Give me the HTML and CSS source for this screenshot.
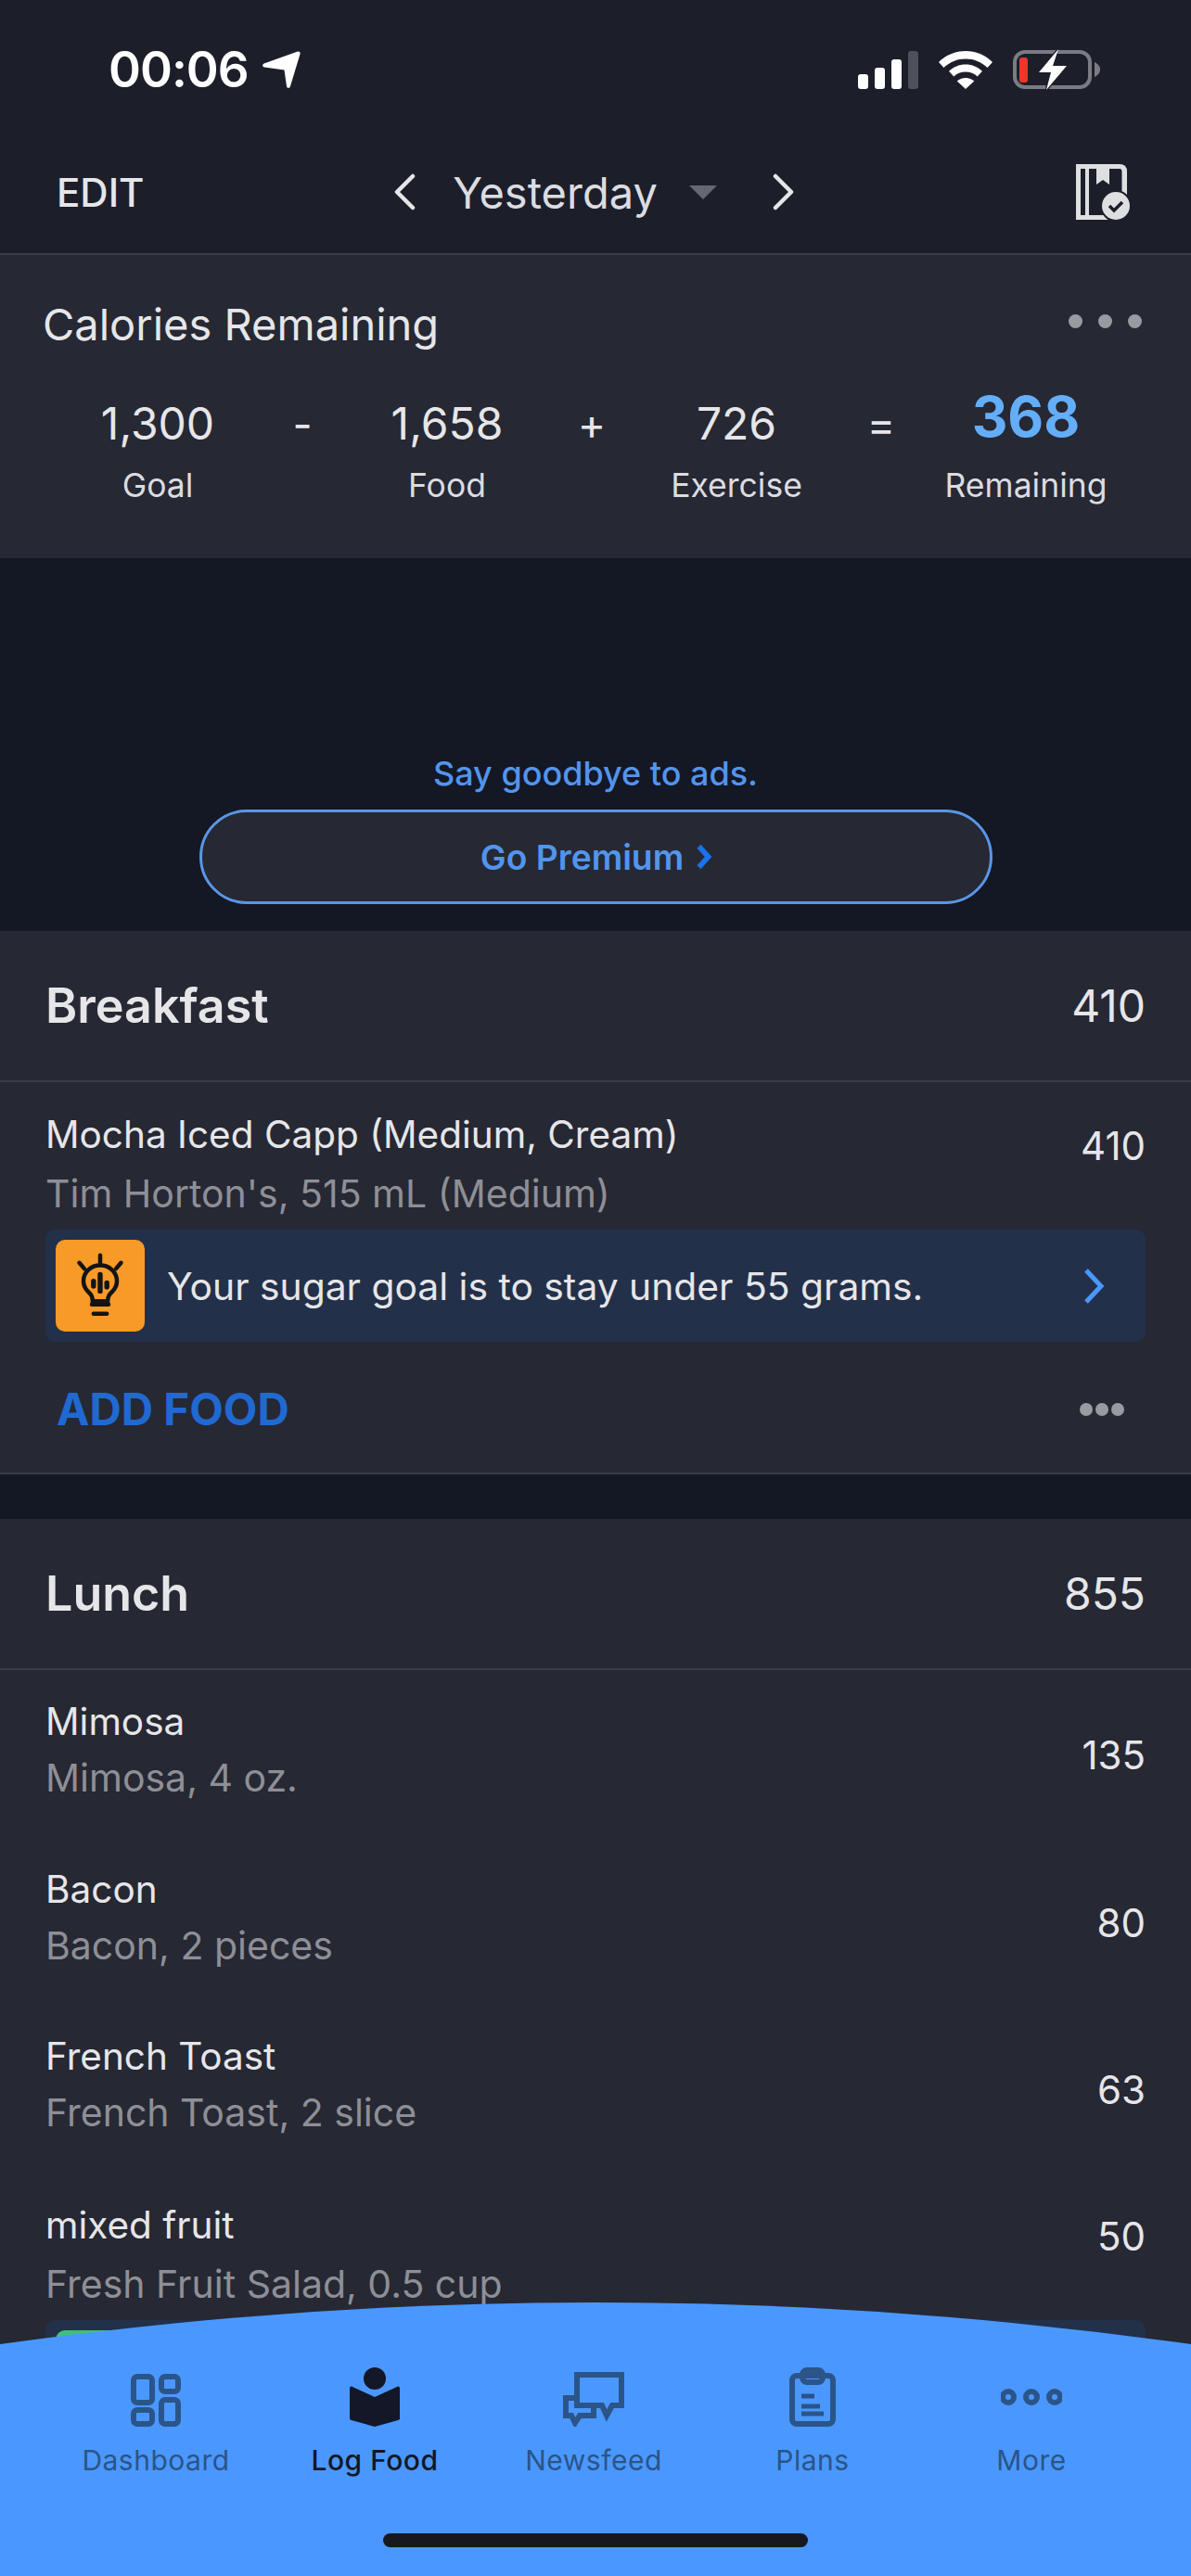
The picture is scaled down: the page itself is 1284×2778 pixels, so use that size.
FILE: index.html
```html
<!DOCTYPE html>
<html lang="en">
  <head>
    <meta charset="utf-8">
    <title>Diary</title>
    <link rel="stylesheet" href="styles.css">
  </head>
  <body>
    <div class="phone">
      <header class="topbar">
        <div class="status">
          <div class="clock">
            <span>00:06</span>
            <svg class="loc" viewBox="0 0 41 40"><path d="M38 0.500c1.600-.5 3 .8 2.600 2.400L30 38c-.6 2.500-3.600 2.500-4-.1L23.500 20.500 2 17.500c-2.200-.4-2.500-3-.4-4z"/></svg>
          </div>
          <div class="indicators">
            <svg class="signal" viewBox="0 0 65 41">
              <rect x="0" y="25" width="11" height="16" rx="3"/>
              <rect x="18" y="18" width="11" height="23" rx="3"/>
              <rect x="36" y="9" width="11" height="32" rx="3"/>
              <rect class="off" x="54" y="0" width="11" height="41" rx="3"/>
            </svg>
            <svg class="wifi" viewBox="0 0 58 41">
              <path d="M29 0c11 0 21 4.200 29 12l-5.500 6C46 11.800 38 8.500 29 8.500S12 11.800 5.500 18L0 12C8 4.200 18 0 29 0z"/>
              <path d="M29 14.500c7 0 13.300 2.700 18 7.300l-5.300 5.700C38.300 24.300 34 22.500 29 22.500s-9.300 1.800-12.700 5L11 21.800c4.700-4.600 11-7.300 18-7.300z"/>
              <path d="M29 29c3.600 0 6.800 1.300 9.200 3.600L29 41l-9.200-8.400C22.200 30.300 25.400 29 29 29z"/>
            </svg>
            <svg class="battery" viewBox="0 0 95 44">
              <rect class="shell" x="2" y="3" width="81" height="38" rx="11"/>
              <rect class="level" x="7" y="9" width="9" height="27" rx="3"/>
              <path class="nub" d="M88 14c3 1.500 6 4 6 8s-3 6.500-6 8z"/>
              <path class="bolt-gap" d="M25 26L49 -2 45 16 63 16 34 48 38 27z"/>
              <path class="bolt" d="M28 25L49 0l-6 18h15L36 44l5-19z"/>
            </svg>
          </div>
        </div>
        <nav class="toolbar">
          <span class="edit">EDIT</span>
          <div class="date-nav">
            <svg class="chev" viewBox="0 0 24 40"><path d="M21 3L4 20l17 17"/></svg>
            <span class="date">Yesterday</span>
            <span class="caret"></span>
            <svg class="chev" viewBox="0 0 24 40"><path d="M3 3l17 17L3 37"/></svg>
          </div>
          <svg class="book-check" viewBox="0 0 60 60">
            <path class="book-body" d="M0 0H47Q55 0 55 8V40H40L34 60H0z"/>
            <path class="book-cut" d="M5 5H10V55H5zM14 5H22V22L29 17L36 22V5H47Q49.500 5 49.500 8V45H30V55H14z"/>
            <circle class="check-ring" cx="43" cy="45" r="17"/>
            <circle class="check-disc" cx="43" cy="45" r="15"/>
            <path class="check-mark" d="M36 45l5 5 9-9"/>
          </svg>
        </nav>
      </header>

      <section class="summary">
        <div class="summary-head">
          <h2>Calories Remaining</h2>
          <div class="dots"><i></i><i></i><i></i></div>
        </div>
        <div class="equation">
          <div class="term"><b>1,300</b><span>Goal</span></div>
          <div class="op">-</div>
          <div class="term"><b>1,658</b><span>Food</span></div>
          <div class="op">+</div>
          <div class="term"><b>726</b><span>Exercise</span></div>
          <div class="op">=</div>
          <div class="term result"><b>368</b><span>Remaining</span></div>
        </div>
      </section>

      <section class="promo">
        <p>Say goodbye to ads.</p>
        <div class="premium-btn">
          <span>Go Premium</span>
          <svg viewBox="0 0 16 26"><path d="M4 3l9 10-9 10"/></svg>
        </div>
      </section>

      <section class="meal">
        <div class="meal-head"><h2>Breakfast</h2><span>410</span></div>
        <div class="food food-tipped">
          <div class="food-text">
            <div class="food-name">Mocha Iced Capp (Medium, Cream)</div>
            <div class="food-sub">Tim Horton's, 515 mL (Medium)</div>
          </div>
          <div class="kcal">410</div>
        </div>
        <div class="tip">
          <div class="tip-icon">
            <svg viewBox="0 0 60 80">
              <path class="bulb" d="M30 3v9M5 12l6 7M55 12l-6 7M20 62h20M22 73h16"/>
              <path class="bulb" d="M21 58c0-6-2-8-6-12-3-3-5-8-5-12 0-11 9-19 20-19s20 8 20 19c0 4-2 9-5 12-4 4-6 6-6 12z"/>
              <path class="bulb-bars" d="M22 34v6M30 26v20M38 36v5"/>
            </svg>
          </div>
          <span class="tip-text">Your sugar goal is to stay under 55 grams.</span>
          <svg class="tip-chev" viewBox="0 0 24 40"><path d="M4 3l16 17L4 37"/></svg>
        </div>
        <div class="meal-foot">
          <span class="add-food">ADD FOOD</span>
          <div class="dots dots-small"><i></i><i></i><i></i></div>
        </div>
      </section>

      <section class="meal meal-lunch">
        <div class="meal-head"><h2>Lunch</h2><span>855</span></div>
        <div class="food">
          <div class="food-text">
            <div class="food-name">Mimosa</div>
            <div class="food-sub">Mimosa, 4 oz.</div>
          </div>
          <div class="kcal">135</div>
        </div>
        <div class="food">
          <div class="food-text">
            <div class="food-name">Bacon</div>
            <div class="food-sub">Bacon, 2 pieces</div>
          </div>
          <div class="kcal">80</div>
        </div>
        <div class="food">
          <div class="food-text">
            <div class="food-name">French Toast</div>
            <div class="food-sub">French Toast, 2 slice</div>
          </div>
          <div class="kcal">63</div>
        </div>
        <div class="food food-tipped">
          <div class="food-text">
            <div class="food-name">mixed fruit</div>
            <div class="food-sub">Fresh Fruit Salad, 0.5 cup</div>
          </div>
          <div class="kcal">50</div>
        </div>
        <div class="tip">
          <div class="tip-icon tip-icon-green"></div>
        </div>
      </section>

      <footer class="tabbar">
        <div class="tabs">
          <div class="tab">
            <svg viewBox="0 0 54 64">
              <rect x="3" y="10" width="20" height="28" rx="4"/>
              <rect x="33" y="10" width="18" height="16" rx="4"/>
              <rect x="3" y="46" width="20" height="15" rx="4"/>
              <rect x="33" y="35" width="18" height="26" rx="4"/>
            </svg>
            <span>Dashboard</span>
          </div>
          <div class="tab active">
            <svg viewBox="0 0 54 64">
              <circle class="solid" cx="27" cy="12" r="12"/>
              <path class="solid" d="M3 21l24 11 24-11c2-1 3 0 3 2v32c0 1-1 2-2 2L27 64 2 57c-1 0-2-1-2-2V23c0-2 1-3 3-2z"/>
            </svg>
            <span>Log Food</span>
          </div>
          <div class="tab">
            <svg viewBox="0 0 66 64">
              <path d="M15 8H63V41H53L47 52L42 41H15Z"/>
              <path d="M15 33H3V52H9L13 60L18 52H33V41"/>
            </svg>
            <span>Newsfeed</span>
          </div>
          <div class="tab">
            <svg viewBox="0 0 50 64">
              <rect x="3" y="9" width="44" height="52" rx="5"/>
              <rect x="14" y="3" width="22" height="13" rx="5"/>
              <path class="thin" d="M13 31h14M13 42h20M13 50h24"/>
            </svg>
            <span>Plans</span>
          </div>
          <div class="tab">
            <svg viewBox="0 0 66 64">
              <circle cx="8" cy="32" r="6"/>
              <circle cx="33" cy="32" r="6"/>
              <circle cx="58" cy="32" r="6"/>
            </svg>
            <span>More</span>
          </div>
        </div>
        <div class="home-bar"></div>
      </footer>
    </div>
  </body>
</html>
```

FILE: styles.css
```css
* {
  box-sizing: border-box;
}
html, body {
  margin: 0;
  padding: 0;
}
body {
  font-family: Inter, "Liberation Sans", sans-serif;
  background: #141724;
  color: #e6e6e9;
}
h2 {
  margin: 0;
  font-weight: 400;
}
.phone {
  position: relative;
  width: 1284px;
  height: 2778px;
  overflow: hidden;
  background: #141724;
}

/* top */
.topbar {
  background: #1c1f2a;
  height: 275px;
  border-bottom: 2px solid #3a3c46;
}
.status {
  display: flex;
  justify-content: space-between;
  padding: 53px 97px 0 117px;
  height: 170px;
}
.clock {
  display: flex;
  gap: 15px;
  height: 44px;
  align-items: center;
  font-size: 53px;
  letter-spacing: -1px;
  font-weight: 600;
  color: #fff;
}
.loc {
  width: 41px;
  height: 40px;
  fill: #fff;
}
.indicators {
  display: flex;
  gap: 22px;
  height: 44px;
  align-items: center;
}
.signal {
  width: 65px;
  height: 41px;
  fill: #fff;
}
.signal .off {
  fill: #4e515c;
}
.wifi {
  width: 58px;
  height: 41px;
  fill: #fff;
}
.battery {
  width: 95px;
  height: 44px;
  overflow: visible;
}
.battery .shell {
  fill: none;
  stroke: #7b7c83;
  stroke-width: 4;
}
.battery .level {
  fill: #f0352b;
}
.battery .nub {
  fill: #7b7c83;
}
.battery .bolt-gap {
  fill: #1c1f2a;
}
.battery .bolt {
  fill: #fff;
}
.toolbar {
  display: grid;
  grid-template-columns: 1fr auto 1fr;
  align-items: center;
  padding: 0 64px 0 61px;
  margin-top: 4px;
  height: 66px;
}
.edit {
  font-size: 42px;
  font-weight: 500;
  color: #e6e6e9;
}
.date-nav {
  display: flex;
  align-items: center;
}
.chev {
  width: 24px;
  height: 40px;
  fill: none;
  stroke: #e6e6e9;
  stroke-width: 4.500;
  stroke-linecap: round;
  stroke-linejoin: round;
}
.date {
  font-size: 47px;
  margin-left: 40px;
  color: #dcdce0;
}
.caret {
  width: 0;
  height: 0;
  margin: 0 60px 0 34px;
  border-left: 15px solid transparent;
  border-right: 15px solid transparent;
  border-top: 15px solid #666770;
}
.book-check {
  justify-self: end;
  width: 60px;
  height: 60px;
}
.book-body {
  fill: #dfdfe2;
}
.book-cut {
  fill: #1c1f2a;
}
.check-ring {
  fill: #1c1f2a;
}
.check-disc {
  fill: #dfdfe2;
}
.check-mark {
  fill: none;
  stroke: #1c1f2a;
  stroke-width: 3.500;
}

/* calories */
.summary {
  height: 327px;
  background: #262833;
  padding: 46px 46px 0;
}
.summary-head {
  display: flex;
  justify-content: space-between;
  align-items: center;
  height: 56px;
}
.summary-head h2 {
  font-size: 47px;
}
.dots {
  display: flex;
  gap: 17px;
  padding: 0 7px 5px 0;
}
.dots i {
  width: 15px;
  height: 15px;
  border-radius: 50%;
  background: #9a9ba0;
}
.equation {
  display: grid;
  grid-template-columns: repeat(7, 156px);
  margin: 49px 0 0 46px;
  text-align: center;
}
.term {
  display: flex;
  flex-direction: column;
  align-items: center;
}
.term b {
  height: 62px;
  line-height: 62px;
  font-size: 48px;
  font-weight: 400;
}
.term span {
  margin-top: 10px;
  font-size: 35.500px;
  line-height: 52px;
  white-space: nowrap;
  color: #dcdce0;
}
.op {
  font-size: 46px;
  line-height: 62px;
}
.result b {
  color: #64aef8;
  font-size: 60px;
  font-weight: 700;
  margin-top: -8px;
  margin-bottom: 8px;
}

/* ad */
.promo {
  height: 402px;
  padding-top: 203px;
  text-align: center;
}
.promo p {
  margin: 0;
  font-size: 36px;
  font-weight: 500;
  line-height: 58px;
  color: #5295ec;
}
.premium-btn {
  display: flex;
  justify-content: center;
  align-items: center;
  gap: 12px;
  width: 855px;
  height: 102px;
  margin: 10px 0 0 215px;
  background: #262833;
  border: 3px solid #5a96e6;
  border-radius: 51px;
  font-size: 37.200px;
  font-weight: 600;
  color: #5295ec;
}
.premium-btn svg {
  width: 18px;
  height: 30px;
  fill: none;
  stroke: #1a73e8;
  stroke-width: 5;
}

/* meals */
.meal {
  background: #262833;
  height: 586px;
  border-bottom: 2px solid #3a3c46;
}
.meal-lunch {
  margin-top: 48px;
  height: auto;
  min-height: 1140px;
  border-bottom: 0;
}
.meal-head {
  display: flex;
  justify-content: space-between;
  align-items: center;
  height: 163px;
  padding: 0 49px;
  border-bottom: 2px solid #3a3c46;
  font-size: 48px;
}
.meal-head h2 {
  font-size: 52px;
  font-weight: 600;
}
.food {
  display: flex;
  justify-content: space-between;
  align-items: center;
  height: 180.500px;
  padding: 0 49px 8px;
}
.food-tipped {
  align-items: flex-start;
  height: 159px;
  padding: 31px 49px 0;
}
.food-name {
  font-size: 40.500px;
  line-height: 52px;
  color: #e6e6e9;
}
.food-sub {
  margin-top: 8px;
  font-size: 41px;
  line-height: 52px;
  color: #8e8f96;
}
.food-tipped .food-sub {
  margin-top: 11px;
}
.kcal {
  padding-top: 12px;
  font-size: 42px;
  line-height: 52px;
  color: #e6e6e9;
}
.tip {
  display: flex;
  align-items: center;
  height: 121px;
  margin: 0 49px;
  padding: 0 44px 0 11px;
  background: #233049;
  border-radius: 10px;
}
.tip-icon {
  display: flex;
  justify-content: center;
  align-items: center;
  width: 96px;
  height: 99px;
  background: #f89a28;
  border-radius: 10px;
}
.tip-icon svg {
  width: 54px;
  height: 72px;
}
.tip-icon-green {
  background: #3fbf7f;
}
.bulb {
  fill: none;
  stroke: #141414;
  stroke-width: 5;
  stroke-linecap: round;
}
.bulb-bars {
  fill: none;
  stroke: #141414;
  stroke-width: 6;
  stroke-linecap: round;
}
.tip-text {
  flex: 1;
  margin-left: 24px;
  font-size: 40.800px;
}
.tip-chev {
  width: 24px;
  height: 40px;
  fill: none;
  stroke: #4a98ff;
  stroke-width: 5;
}
.meal-foot {
  display: flex;
  justify-content: space-between;
  align-items: center;
  height: 141px;
  padding: 4px 72px 0 61px;
}
.add-food {
  font-size: 47.500px;
  font-weight: 700;
  color: #2069d2;
}
.dots-small {
  gap: 3px;
  padding: 0;
}
.dots-small i {
  width: 14px;
  height: 14px;
}

/* tabs */
.tabbar {
  position: absolute;
  left: 0;
  right: 0;
  bottom: 0;
  height: 295px;
  background: #4a98ff;
  clip-path: circle(4602px at 50% 4602px);
}
.tabs {
  display: grid;
  grid-template-columns: repeat(5, 236px);
  padding: 70px 0 0 50px;
}
.tab {
  display: flex;
  flex-direction: column;
  align-items: center;
  font-size: 30px;
  letter-spacing: 0.500px;
  color: #2b5488;
}
.tab svg {
  height: 64px;
  fill: none;
  stroke: #2b5488;
  stroke-width: 6;
}
.tab span {
  margin-top: 16px;
  line-height: 40px;
}
.tab.active {
  color: #141727;
  font-weight: 500;
}
.tab .solid {
  fill: #141727;
  stroke: none;
}
.tab .thin {
  stroke-width: 5;
}
.home-bar {
  width: 458px;
  height: 15px;
  margin: 59px 0 0 413px;
  border-radius: 8px;
  background: #17191f;
}
```
